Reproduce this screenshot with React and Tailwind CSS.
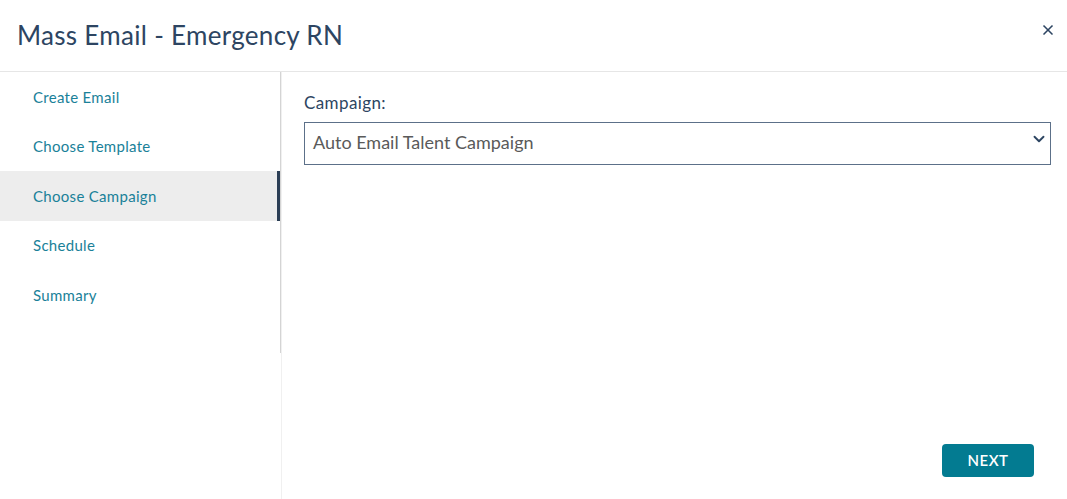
import { X, ChevronDown } from 'lucide-react'

const steps = ['Create Email', 'Choose Template', 'Choose Campaign', 'Schedule', 'Summary']

const App = () => {
  const active = 'Choose Campaign'

  return (
    <div className="w-[1067px] h-[499px] bg-white flex flex-col overflow-hidden" style={{ fontFamily: 'Lato, "Open Sans", sans-serif' }}>
      {/* Header */}
      <div className="h-[72px] shrink-0 flex items-center justify-between pl-[17px] pr-[9px] border-b border-[#e6e6e6]">
        <h1 className="text-[26px] leading-none tracking-[0.3px] text-[#2d4562] pb-[2px]">Mass Email - Emergency RN</h1>
        <button className="w-5 h-5 flex items-center justify-center text-[#2d4562] -mt-[11px]">
          <X size={16} strokeWidth={2.5} />
        </button>
      </div>

      {/* Body */}
      <div className="flex flex-1 min-h-0">
        {/* Sidebar */}
        <div className="w-[282px] shrink-0 border-r border-[#f0f0f0]">
          <div className="w-[281px] h-[281px] border-r border-[#d4d4d4]">
            {steps.map((s) => (
              <div
                key={s}
                className={`h-[49.6px] flex items-center pl-[33px] text-[15px] tracking-[0.3px] text-[#1a8199] cursor-pointer ${s === active ? 'bg-[#ededed] border-r-[3px] border-[#2b3e55]' : ''}`}
              >
                {s}
              </div>
            ))}
          </div>
        </div>

        {/* Content */}
        <div className="flex-1 flex flex-col pl-[22px] pr-[16px] pt-[21px] pb-[22px]">
          <label className="text-[17px] tracking-[0.4px] text-[#2d4562] leading-5">Campaign:</label>
          <div className="mt-[9px] h-[43px] border border-[#5c7089] flex items-center justify-between pl-[8px] pr-[2px] pb-[3px]">
            <span className="text-[18px] text-[#5a5a5a]">Auto Email Talent Campaign</span>
            <ChevronDown size={18} strokeWidth={2.5} className="text-[#2d4562] -mt-[6px]" />
          </div>
          <div className="flex-1" />
          <div className="flex justify-end pr-[17px]">
            <button className="w-[92px] h-[33px] rounded-[4px] bg-[#037b91] text-white text-[15px] tracking-[0.5px] font-semibold">NEXT</button>
          </div>
        </div>
      </div>
    </div>
  )
}

export default App
